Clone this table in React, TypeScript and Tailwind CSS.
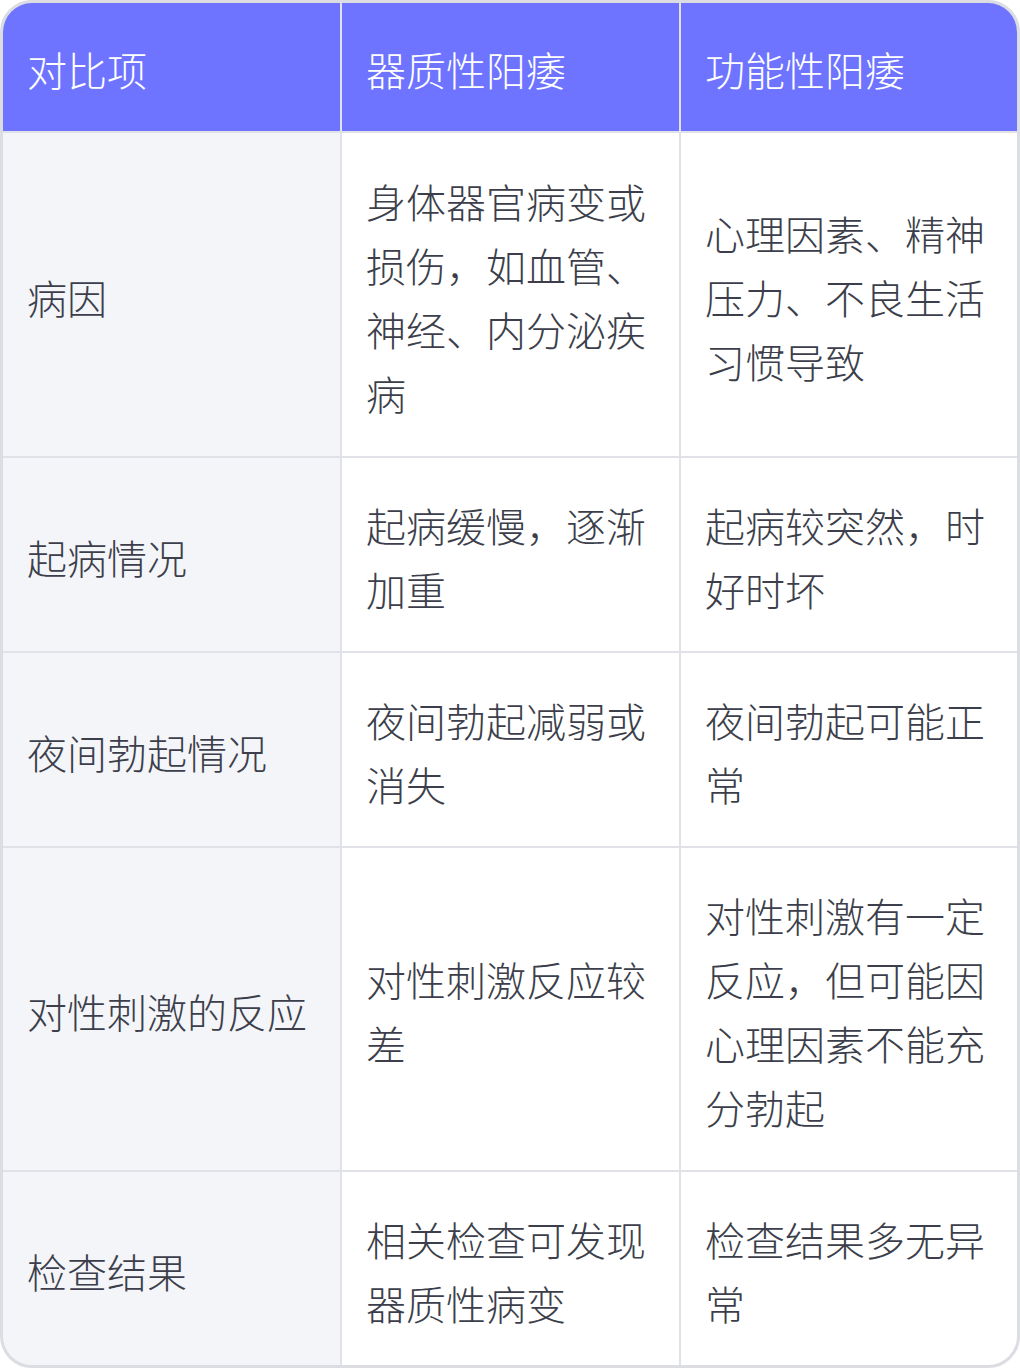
const rows = [
  {
    item: "病因",
    organic: "身体器官病变或损伤，如血管、神经、内分泌疾病",
    functional: "心理因素、精神压力、不良生活习惯导致",
  },
  {
    item: "起病情况",
    organic: "起病缓慢，逐渐加重",
    functional: "起病较突然，时好时坏",
  },
  {
    item: "夜间勃起情况",
    organic: "夜间勃起减弱或消失",
    functional: "夜间勃起可能正常",
  },
  {
    item: "对性刺激的反应",
    organic: "对性刺激反应较差",
    functional: "对性刺激有一定反应，但可能因心理因素不能充分勃起",
  },
  {
    item: "检查结果",
    organic: "相关检查可发现器质性病变",
    functional: "检查结果多无异常",
  },
]

const font = { fontFamily: '"Noto Sans CJK SC", "Noto Sans", sans-serif' }

const App = () => {
  return (
    <div className="w-[1020px] h-[1368px] bg-white" style={font}>
      <div className="grid grid-cols-[337px_337px_1fr] grid-rows-[128px_323px_193px_193px_322px_193px] gap-[2px] h-full bg-[#e1e2e8] border-[3px] border-[#dcdde2] rounded-[32px] overflow-hidden text-[40px] leading-[64px] font-light">
        <div className="flex items-center pl-[24px] pt-[4px] bg-[#6e74ff] text-white">对比项</div>
        <div className="flex items-center pl-[24px] pt-[4px] bg-[#6e74ff] text-white">器质性阳痿</div>
        <div className="flex items-center pl-[24px] pt-[4px] bg-[#6e74ff] text-white">功能性阳痿</div>
        {rows.map((r) => (
          <>
            <div key={r.item + "a"} className="flex items-center pl-[24px] pr-[20px] pt-[4px] bg-[#f4f5f9] text-[#3c3f4b]">
              {r.item}
            </div>
            <div key={r.item + "b"} className="flex items-center px-[24px] pt-[4px] bg-white text-[#3c3f4b]">
              {r.organic}
            </div>
            <div key={r.item + "c"} className="flex items-center px-[24px] pt-[4px] bg-white text-[#3c3f4b]">
              {r.functional}
            </div>
          </>
        ))}
      </div>
    </div>
  )
}

export default App
